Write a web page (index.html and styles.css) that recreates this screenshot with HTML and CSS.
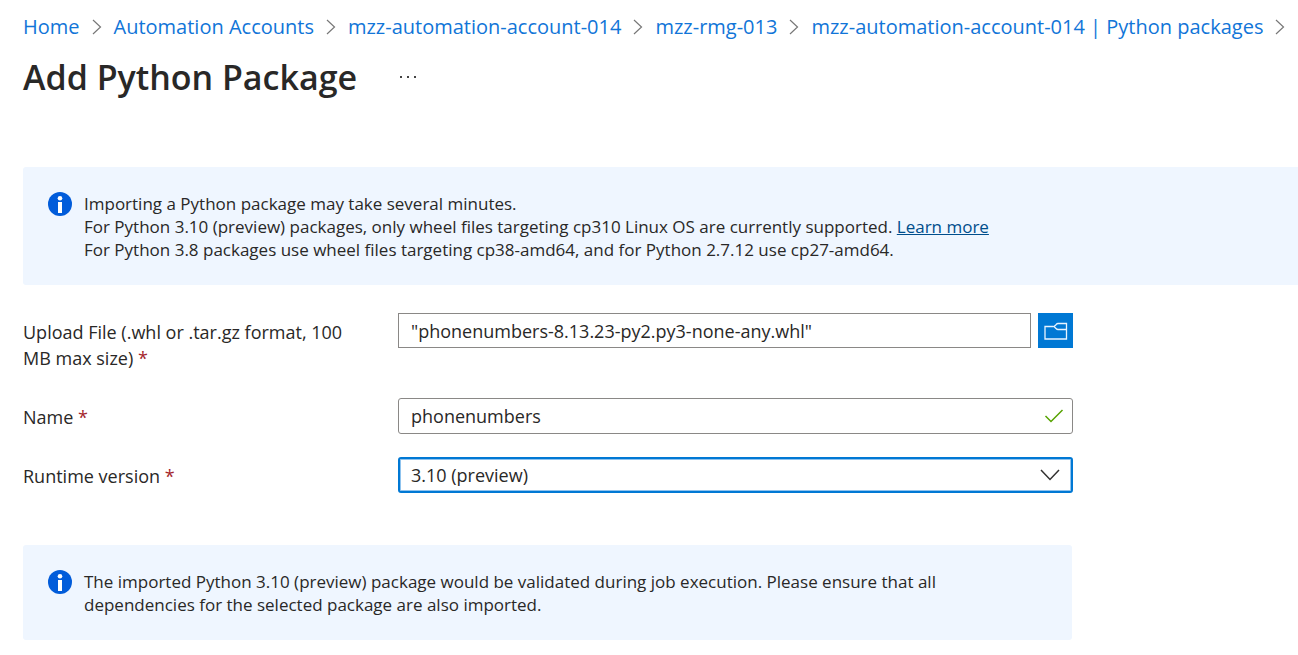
FILE: index.html
```html
<!DOCTYPE html>
<html lang="en">
<head>
<meta charset="utf-8">
<title>Add Python Package</title>
<link rel="stylesheet" href="styles.css">
</head>
<body>
<nav class="breadcrumb" aria-label="Breadcrumb">
  <a href="#">Home</a>
  <svg class="sep" viewBox="0 0 10 16" aria-hidden="true"><path d="M1 1l7.500 7L1 15"/></svg>
  <a href="#">Automation Accounts</a>
  <svg class="sep" viewBox="0 0 10 16" aria-hidden="true"><path d="M1 1l7.500 7L1 15"/></svg>
  <a href="#">mzz-automation-account-014</a>
  <svg class="sep" viewBox="0 0 10 16" aria-hidden="true"><path d="M1 1l7.500 7L1 15"/></svg>
  <a href="#">mzz-rmg-013</a>
  <svg class="sep" viewBox="0 0 10 16" aria-hidden="true"><path d="M1 1l7.500 7L1 15"/></svg>
  <a href="#">mzz-automation-account-014 | Python packages</a>
  <svg class="sep" viewBox="0 0 10 16" aria-hidden="true"><path d="M1 1l7.500 7L1 15"/></svg>
</nav>
<header class="title-bar">
  <h1>Add Python Package</h1>
  <button class="more" type="button" aria-label="More actions">
    <svg viewBox="0 0 18 4" aria-hidden="true"><path d="M1 1h2v2H1zM8 1h2v2H8zM15 1h2v2h-2z"/></svg>
  </button>
</header>
<main>
  <section class="banner banner-wide">
    <svg class="info" viewBox="0 0 24 24" aria-hidden="true"><circle class="disc" cx="12" cy="12" r="12"/><circle cx="12" cy="6.300" r="2.300"/><path d="M10 10h4v11h-4z"/></svg>
    <p>Importing a Python package may take several minutes.<br>For Python 3.10 (preview) packages, only wheel files targeting cp310 Linux OS are currently supported. <a href="#">Learn more</a><br>For Python 3.8 packages use wheel files targeting cp38-amd64, and for Python 2.7.12 use cp27-amd64.</p>
  </section>
  <form class="form">
    <div class="row row-upload">
      <label for="file">Upload File (.whl or .tar.gz format, 100 MB max size) <span class="req">*</span></label>
      <div class="control upload">
        <input class="field square" id="file" type="text" value="&quot;phonenumbers-8.13.23-py2.py3-none-any.whl&quot;" readonly>
        <button class="browse" type="button" aria-label="Browse files">
          <svg viewBox="0 0 24 18" aria-hidden="true"><path d="M9.500 4.500H1v12.500h21.500V1.500H14q-1 0-2 1.200L10 4.500l2 2q1 1 2 1h8.500"/></svg>
        </button>
      </div>
    </div>
    <div class="row">
      <label for="name">Name <span class="req">*</span></label>
      <div class="control stacked">
        <input class="field" id="name" type="text" value="phonenumbers">
        <svg class="mark check" viewBox="0 0 20 14" aria-hidden="true"><path d="M1.500 7l5.500 5.500L18.500 1"/></svg>
      </div>
    </div>
    <div class="row">
      <label for="runtime">Runtime version <span class="req">*</span></label>
      <div class="control stacked">
        <select class="field active" id="runtime"><option>3.10 (preview)</option></select>
        <svg class="mark chevron" viewBox="0 0 20 12" aria-hidden="true"><path d="M1 1l9 9.500L19 1"/></svg>
      </div>
    </div>
  </form>
  <section class="banner banner-form">
    <svg class="info" viewBox="0 0 24 24" aria-hidden="true"><circle class="disc" cx="12" cy="12" r="12"/><circle cx="12" cy="6.300" r="2.300"/><path d="M10 10h4v11h-4z"/></svg>
    <p>The imported Python 3.10 (preview) package would be validated during job execution. Please ensure that all dependencies for the selected package are also imported.</p>
  </section>
</main>
</body>
</html>
```
FILE: styles.css
```css
* { box-sizing: border-box; }
body {
  margin: 0;
  padding: 12px 0 15px 23px;
  background: #fff;
  color: #292827;
  font-family: "Segoe UI", "Open Sans", "Noto Sans", sans-serif;
  font-size: 18px;
}
svg { display: block; flex: none; fill: none; }
.breadcrumb {
  display: flex;
  align-items: center;
  gap: 12px;
  font-size: 20px;
  line-height: 30px;
  white-space: nowrap;
}
.breadcrumb a { color: #1175d8; text-decoration: none; }
.sep { width: 10px; height: 16px; stroke: #777; stroke-width: 1.2; }
.title-bar { display: flex; align-items: center; gap: 42px; margin-top: 12px; }
h1 { margin: 0; font-size: 34px; font-weight: 600; line-height: 46px; }
.more { padding: 0; border: 0; background: none; }
.more svg { width: 18px; height: 4px; fill: #444; }
.banner {
  display: flex;
  gap: 12px;
  padding: 25px 25px 24px;
  border-radius: 3px;
  background: #eff6ff;
}
.banner p { margin: 0; font-size: 17px; line-height: 23px; }
.banner a { color: #004e8c; text-decoration: underline; }
.banner-wide { margin-top: 67px; border-radius: 3px 0 0 3px; }
.banner-form { max-width: 1049px; margin-top: 52px; padding-right: 100px; }
.info { width: 24px; height: 24px; fill: #fff; }
.disc { fill: #015cda; }
.form { display: grid; gap: 23px; max-width: 1050px; margin-top: 28px; }
.row { display: grid; grid-template-columns: 335px 1fr; column-gap: 40px; align-items: start; }
.row-upload { padding-bottom: 4px; }
label { padding-top: 6px; line-height: 26px; }
.req { color: #a4262c; }
.control { display: grid; align-items: center; }
.upload { grid-template-columns: 1fr 35px; gap: 7px; }
.stacked > * { grid-area: 1 / 1; }
.field {
  width: 100%;
  height: 36px;
  padding: 0 12px;
  border: 1px solid #8a8886;
  border-radius: 3px;
  outline: 0;
  background: #fff;
  color: inherit;
  font: inherit;
  appearance: none;
}
.square { height: 35px; border-radius: 0; }
.active { padding: 0 11px; border: 2px solid #0078d4; box-shadow: inset 0 0 0 1px #8fc3ee; }
.mark { justify-self: end; pointer-events: none; }
.check { width: 20px; height: 14px; margin-right: 9px; stroke: #57a300; stroke-width: 1.5; }
.chevron { width: 20px; height: 12px; margin-right: 13px; stroke: #323130; stroke-width: 1.5; }
.browse {
  display: grid;
  place-items: center;
  height: 35px;
  padding: 0;
  border: 0;
  background: #0078d4;
}
.browse svg { width: 24px; height: 18px; stroke: #e8f4ff; stroke-width: 1.3; }
```
